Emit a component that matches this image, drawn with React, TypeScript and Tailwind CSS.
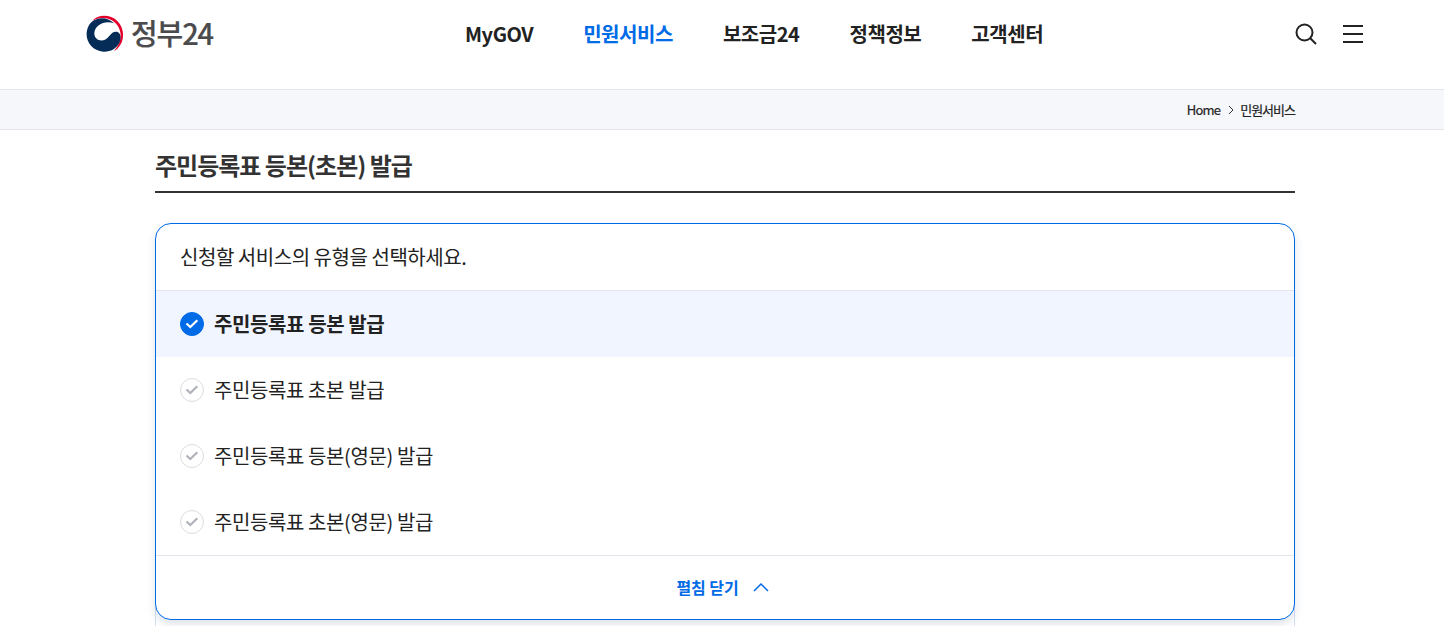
const menus = [
    { label: "MyGOV", active: false },
    { label: "민원서비스", active: true },
    { label: "보조금24", active: false },
    { label: "정책정보", active: false },
    { label: "고객센터", active: false },
];

const services = [
    "주민등록표 등본 발급",
    "주민등록표 초본 발급",
    "주민등록표 등본(영문) 발급",
    "주민등록표 초본(영문) 발급",
];

function Logo() {
    return (
        <a href="#" className="flex items-center gap-[7px]">
            <svg width="38" height="38" viewBox="0 0 114 114" className="shrink-0">
                <path d="M18 18C36 -2 72 -3 94 18C117 41 117 80 94 101C91 104 88 106 84 108C105 86 110 58 96 34C80 8 46 2 18 18Z" fill="#e4002b" />
                <path d="M8 32C22 8 58 0 84 25C58 15 27 28 25 54C24 72 42 81 57 74C70 68 73 51 90 50C103 50 107 66 101 82C91 103 72 111 52 110C13 106 -10 68 8 32Z" fill="#052b57" />
            </svg>
            <span className="-mt-1 text-[29px] leading-[38px] font-medium tracking-[-1.1px] text-[#4b4b4d] [-webkit-text-stroke:0.2px_#4b4b4d]">
                정부24
            </span>
        </a>
    );
}

function CheckMark({ checked }: { checked: boolean }) {
    return (
        <span
            className={`flex size-6 shrink-0 items-center justify-center rounded-full border ${
                checked ? "border-[#006be6] bg-[#006be6] text-white" : "border-[#dcdde0] bg-white text-[#b0b2ba]"
            }`}
        >
            <svg width="14" height="12" viewBox="0 0 14 12" fill="none" stroke="currentColor" strokeWidth="2.2">
                <path d="M1.5 5.5L5.3 9L12.3 2.2" />
            </svg>
        </span>
    );
}

export default function App() {
    return (
        <div className="h-[626px] overflow-hidden bg-white font-['Noto_Sans_CJK_KR',sans-serif] text-[#222]">
            {/* Header */}
            <header className="flex h-[89px] items-start pr-[80px] pl-[86px]">
                <div className="flex w-[379px] pt-[15px]">
                    <Logo />
                </div>
                <nav className="flex gap-[50px] pt-[19px] text-[20px] leading-[30px] font-bold tracking-[-0.45px] whitespace-nowrap">
                    {menus.map((menu) => (
                        <a key={menu.label} href="#" className={menu.active ? "text-[#006be6]" : ""}>
                            {menu.label}
                        </a>
                    ))}
                </nav>
                <div className="ml-auto flex gap-[26.5px] pt-[23px]">
                    <button aria-label="search">
                        <svg width="22" height="22" viewBox="0 0 22 22" fill="none" stroke="#222" strokeWidth="2">
                            <circle cx="9.5" cy="9.5" r="8" />
                            <path d="M15 15L21 21" />
                        </svg>
                    </button>
                    <button aria-label="menu" className="flex w-[21px] flex-col gap-[6px] pt-[2px] pr-px">
                        <span className="h-[2px] w-full bg-[#222]" />
                        <span className="h-[2px] w-full bg-[#222]" />
                        <span className="h-[2px] w-full bg-[#222]" />
                    </button>
                </div>
            </header>

            {/* Breadcrumb */}
            <div className="h-[41px] border-y border-[#e4e5ec] bg-[#f6f7fb]">
                <div className="mx-auto flex h-full w-[1140px] translate-x-[3px] items-center justify-end text-[13px] tracking-[-1px]">
                    <span className="tracking-[-0.8px] [-webkit-text-stroke:0.2px_#222]">Home</span>
                    <svg width="6" height="10" viewBox="0 0 6 10" fill="none" stroke="#333" className="mt-px mr-[6px] ml-[8px]">
                        <path d="M1 1L5 5L1 9" />
                    </svg>
                    <span className="[-webkit-text-stroke:0.2px_#222]">민원서비스</span>
                </div>
            </div>

            <main className="ml-[155px] w-[1140px]">
                <h1 className="h-[63px] border-b-2 border-[#333] pt-[17px] text-[24px] leading-[36px] font-bold tracking-[-1px] text-[#333]">
                    주민등록표 등본(초본) 발급
                </h1>

                {/* Service type selector */}
                <div className="mt-[30px] h-[403px] border-x border-[#d5e0f5] bg-white [border-image:linear-gradient(to_bottom,transparent_50%,#d5e0f5_50%)_1]">
                    <section className="-mx-px h-[397px] overflow-hidden rounded-2xl border border-[#006be6] bg-white text-[20px] leading-[30px] tracking-[-0.4px] shadow-[0_4px_8px_rgba(30,60,110,0.15)]">
                        <p className="h-[67px] border-b border-[#e4e5ec] px-6 pt-[18px] tracking-[-0.46px]">신청할 서비스의 유형을 선택하세요.</p>
                        <ul>
                            {services.map((service, i) => (
                                <li
                                    key={service}
                                    className={`flex h-[66px] items-center gap-[10px] px-6 ${i === 0 ? "bg-[#f0f5ff] font-bold" : ""}`}
                                >
                                    <CheckMark checked={i === 0} />
                                    {service}
                                </li>
                            ))}
                        </ul>
                        <button className="flex h-[64px] w-full items-center justify-center gap-[14px] border-t border-[#e4e5ec] pr-[5px] pb-px text-[16px] font-bold tracking-[-0.1px] text-[#006be6]">
                            펼침 닫기
                            <svg width="16" height="10" viewBox="0 0 16 10" fill="none" stroke="currentColor" strokeWidth="1.5">
                                <path d="M1 9L8 2L15 9" />
                            </svg>
                        </button>
                    </section>
                </div>
            </main>
        </div>
    );
}
